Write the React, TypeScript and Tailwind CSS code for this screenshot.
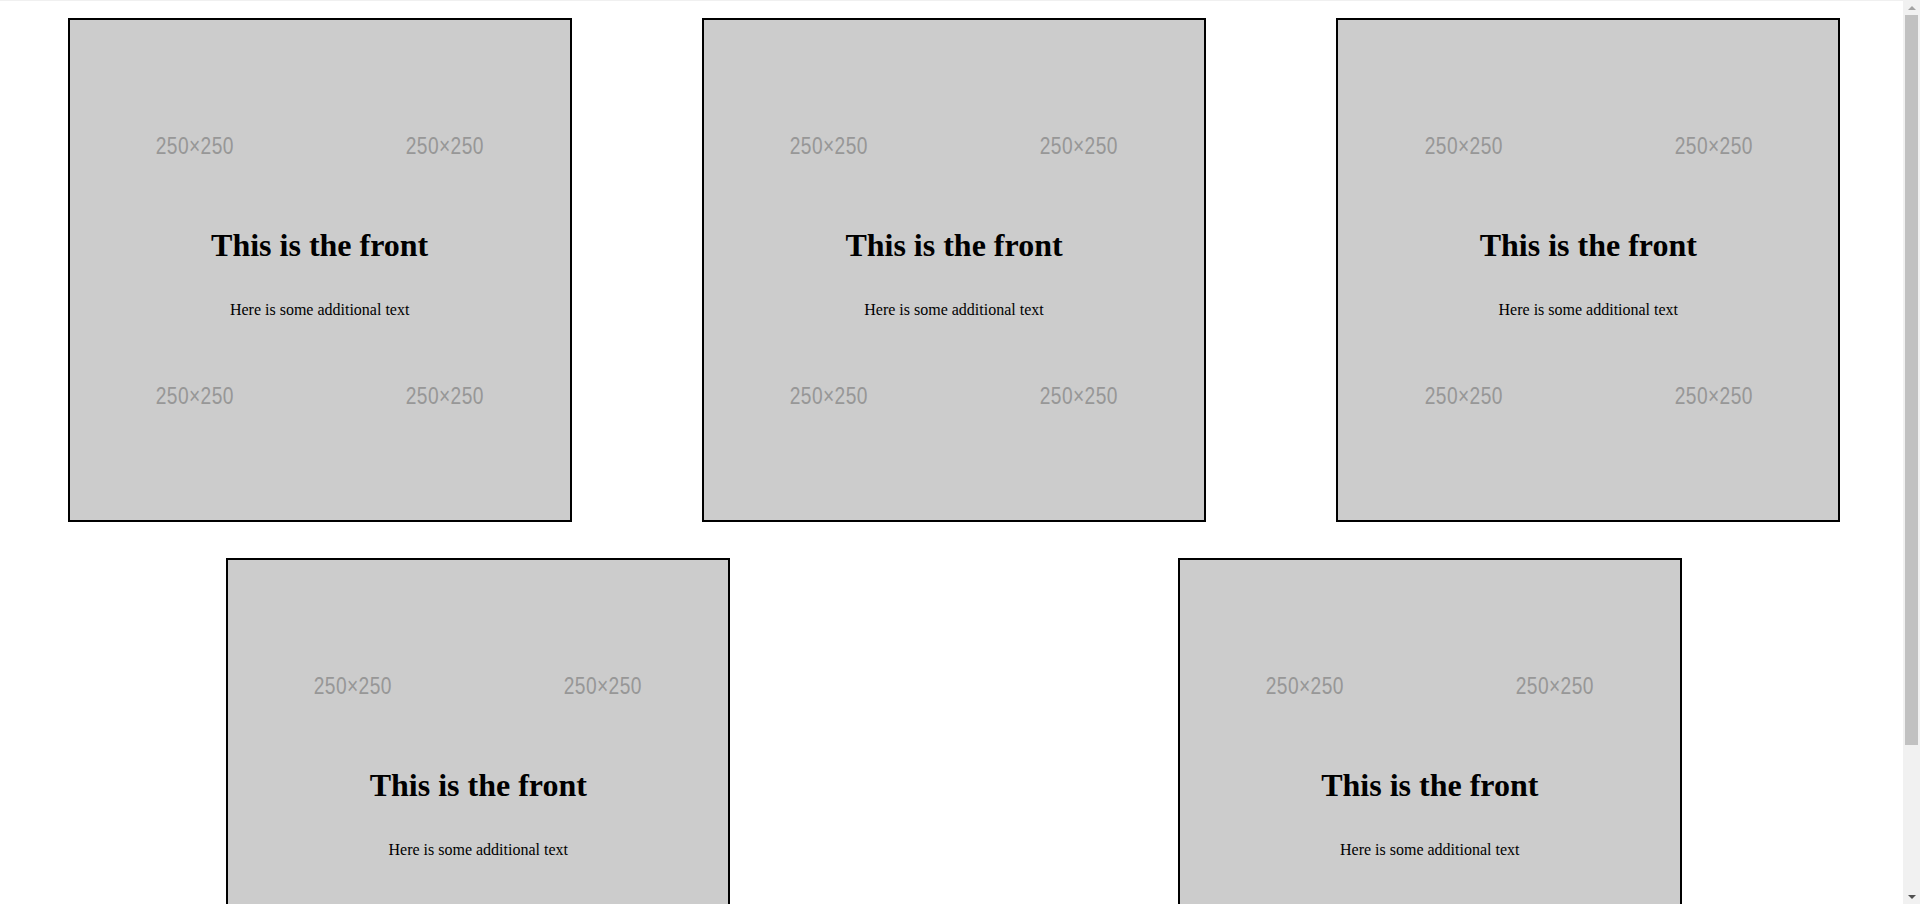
import React from 'react';

const CARD_COUNT = 5;

// the 250x250 placeholder tiles behind each card face
function PlaceholderTile() {
  return (
    <div className="flex h-[250px] w-[250px] items-center justify-center bg-[#cccccc]">
      <span className="inline-block scale-x-[0.8] pt-[1px] font-['Liberation_Sans',Arial,sans-serif] text-[24px] leading-none tracking-[0.5px] text-[#979797]">
        250×250
      </span>
    </div>
  );
}

function FlipCard() {
  return (
    <div className="my-[18px] ml-[5px] grid h-[504px] w-[504px] border-2 border-black bg-[#cccccc]">
      <div className="col-start-1 row-start-1 grid grid-cols-2 grid-rows-2">
        <PlaceholderTile />
        <PlaceholderTile />
        <PlaceholderTile />
        <PlaceholderTile />
      </div>
      <div className="col-start-1 row-start-1 z-10 flex flex-col items-center justify-center text-black font-['Liberation_Serif','Times_New_Roman',serif]">
        <h1 className="my-[21.44px] text-[32px] font-bold leading-[normal]">This is the front</h1>
        <p className="my-4 text-base leading-[normal]">Here is some additional text</p>
      </div>
    </div>
  );
}

// fake classic scrollbar, the reference shows one on the right edge
function Scrollbar() {
  return (
    <div className="fixed right-0 top-0 z-20 flex h-screen w-[17px] flex-col items-center bg-[#f1f1f1]">
      <div className="flex h-[15px] w-full items-center justify-center">
        <div className="h-0 w-0 border-x-[4px] border-b-[4px] border-x-transparent border-b-[#a3a3a3]" />
      </div>
      <div className="h-[730px] w-[13px] bg-[#c1c1c1]" />
      <div className="flex-1" />
      <div className="flex h-[15px] w-full items-center justify-center">
        <div className="h-0 w-0 border-x-[4px] border-t-[4px] border-x-transparent border-t-[#505050]" />
      </div>
    </div>
  );
}

export default function App() {
  return (
    <div className="min-h-screen w-full bg-white">
      <div className="fixed left-0 top-0 z-20 h-px w-[1903px] bg-[#f0f0f0]" />
      <div className="flex w-[calc(100%-17px)] flex-wrap justify-around">
        {Array.from({ length: CARD_COUNT }).map((_, i) => (
          <FlipCard key={i} />
        ))}
      </div>
      <Scrollbar />
    </div>
  );
}
